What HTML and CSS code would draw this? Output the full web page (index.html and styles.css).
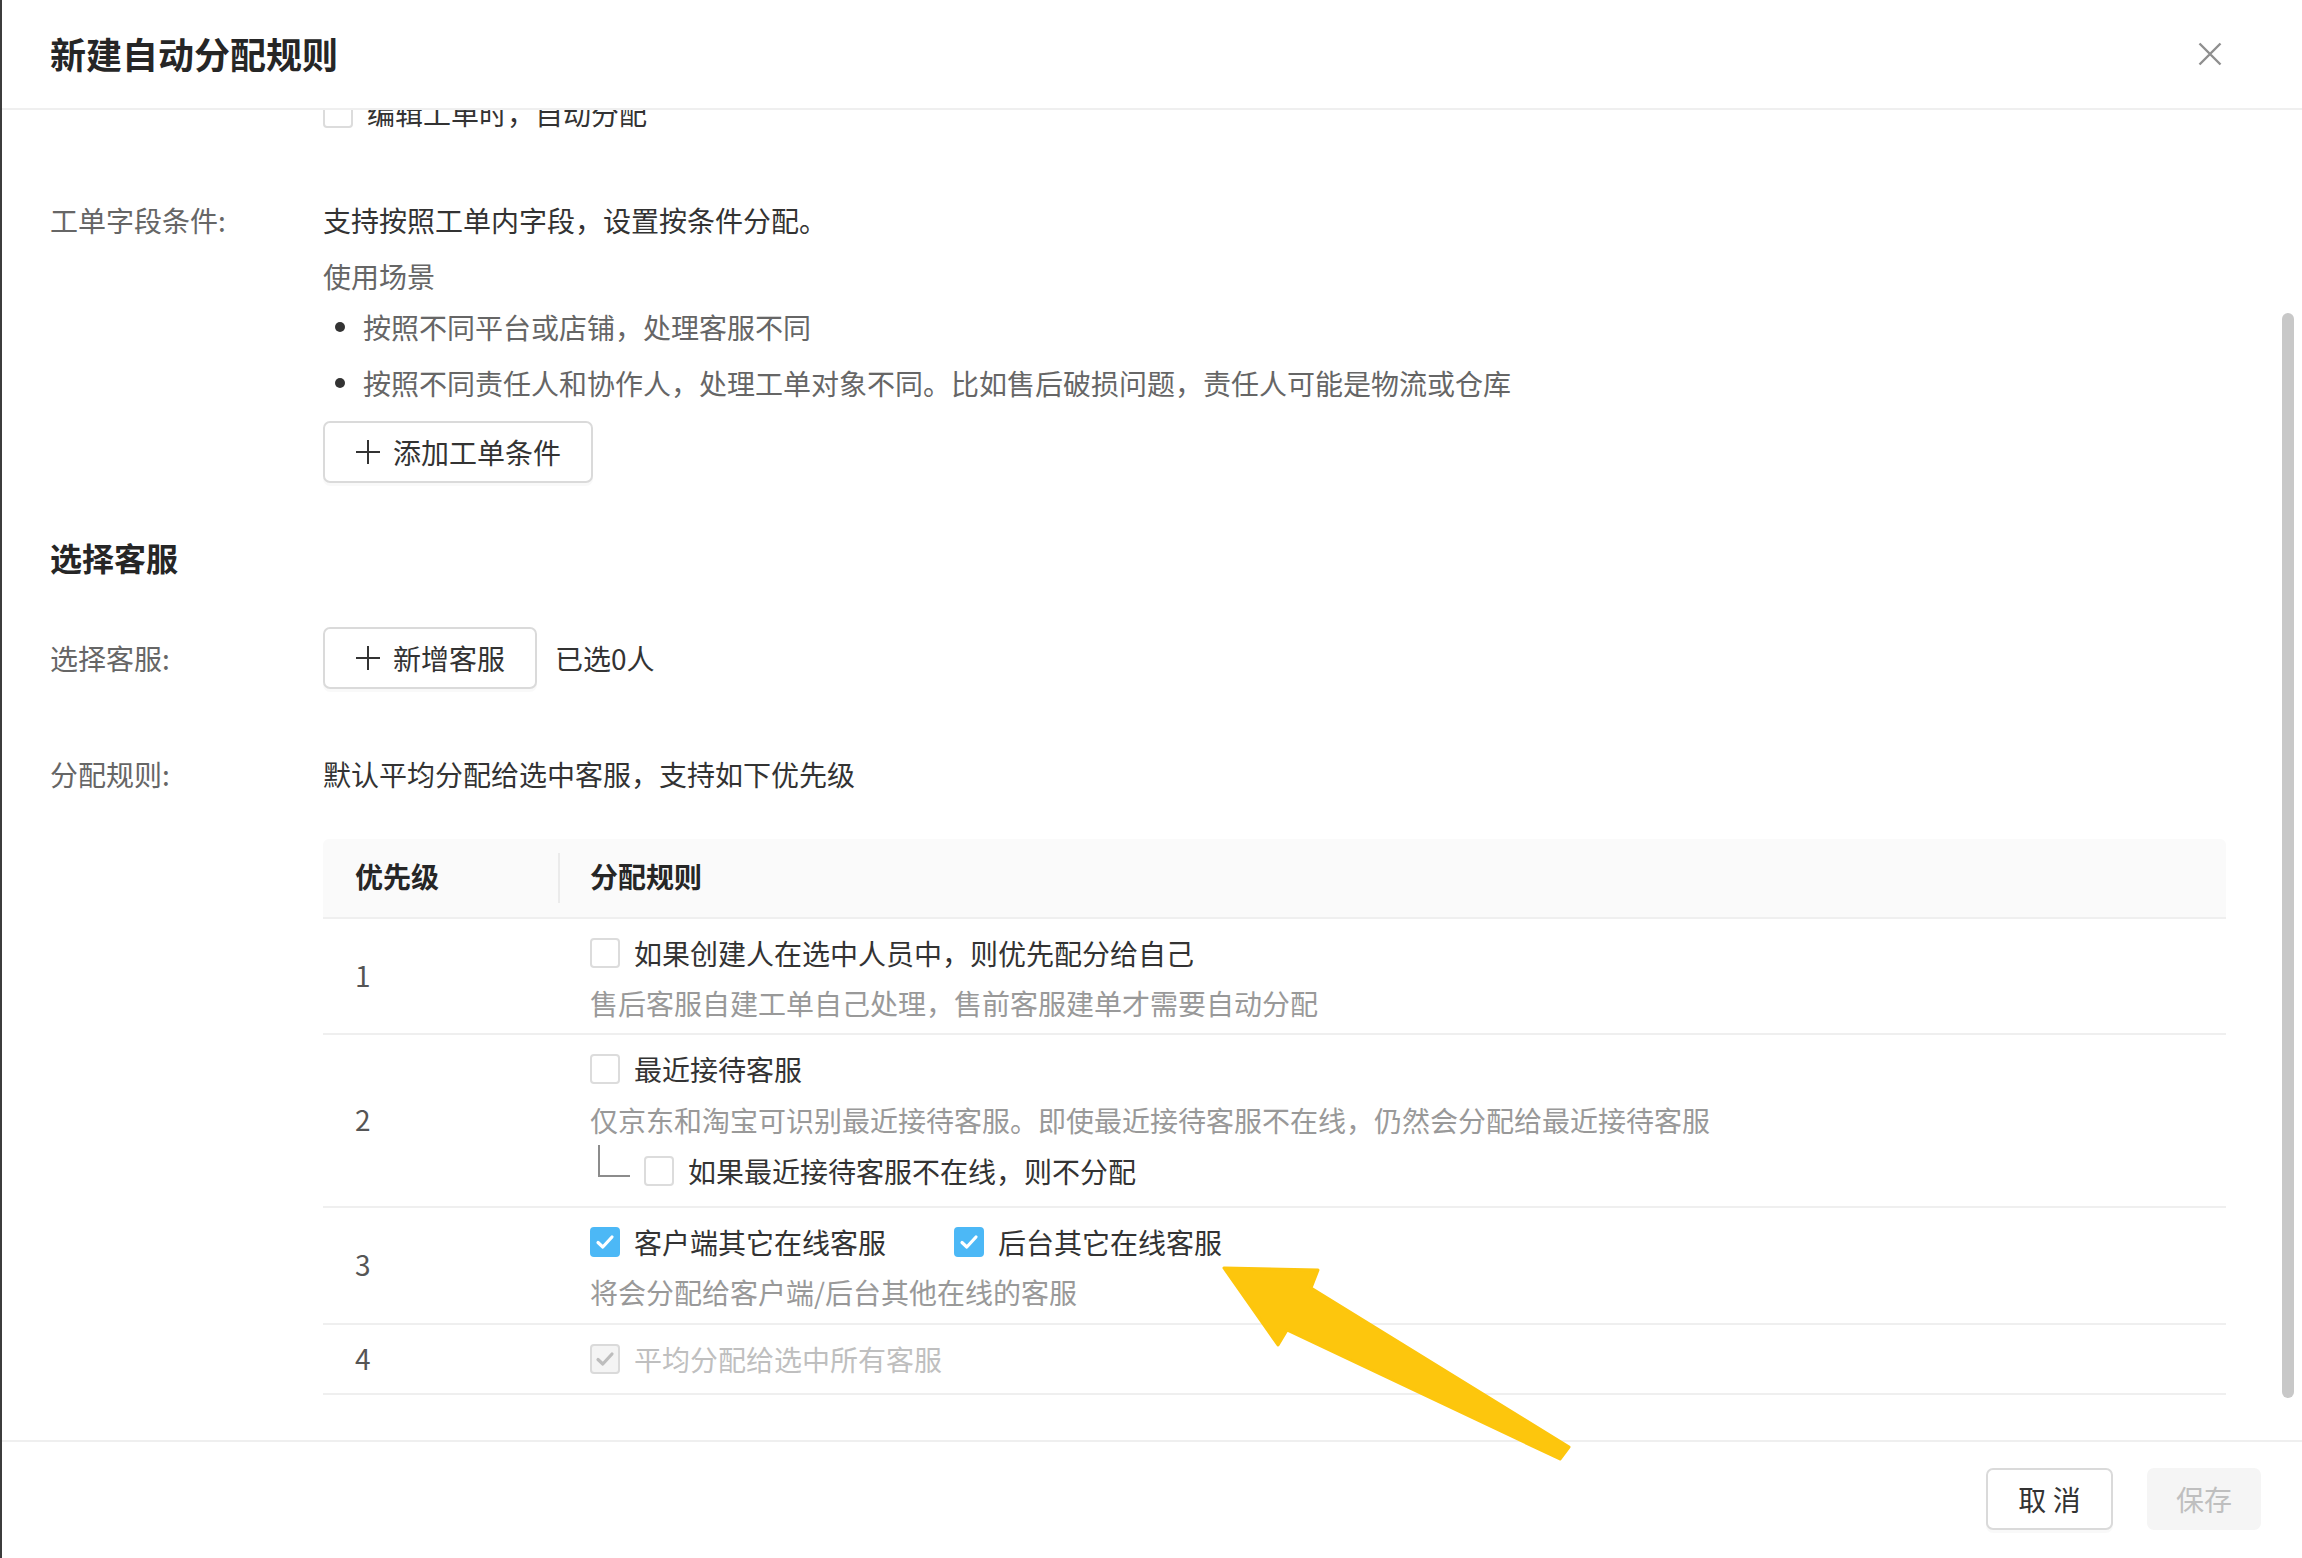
FILE: index.html
```html
<!DOCTYPE html>
<html lang="zh-CN">
<head>
<meta charset="utf-8">
<title>新建自动分配规则</title>
<link rel="stylesheet" href="styles.css">
</head>
<body>
<div class="drawer">
  <header class="drawer-header">
    <h1 class="drawer-title">新建自动分配规则</h1>
    <span class="close-btn">
      <svg width="24" height="24" viewBox="0 0 24 24"><path d="M1.5 1.5 L22.5 22.5 M22.5 1.5 L1.5 22.5" stroke="#8f8f8f" stroke-width="2.4" fill="none"/></svg>
    </span>
  </header>

  <div class="drawer-body">
    <div class="content">
      <div class="form-row first-row">
        <div class="label"></div>
        <div class="field">
          <label class="option"><span class="cb"></span><span class="line">编辑工单时，自动分配</span></label>
        </div>
      </div>

      <div class="form-row cond-row">
        <div class="label line">工单字段条件:</div>
        <div class="field">
          <p class="line">支持按照工单内字段，设置按条件分配。</p>
          <p class="line muted scene">使用场景</p>
          <ul class="bullets">
            <li class="line">按照不同平台或店铺，处理客服不同</li>
            <li class="line">按照不同责任人和协作人，处理工单对象不同。比如售后破损问题，责任人可能是物流或仓库</li>
          </ul>
          <button class="btn add-cond"><svg class="plus" width="26" height="26" viewBox="0 0 26 26"><path d="M13 1 V25 M1 13 H25" stroke="#333" stroke-width="2" fill="none"/></svg>添加工单条件</button>
        </div>
      </div>

      <h2 class="section-title">选择客服</h2>

      <div class="form-row agent-row">
        <div class="label">选择客服:</div>
        <div class="field inline">
          <button class="btn"><svg class="plus" width="26" height="26" viewBox="0 0 26 26"><path d="M13 1 V25 M1 13 H25" stroke="#333" stroke-width="2" fill="none"/></svg>新增客服</button>
          <span class="selected">已选0人</span>
        </div>
      </div>

      <div class="form-row rule-row">
        <div class="label line">分配规则:</div>
        <div class="field">
          <p class="line">默认平均分配给选中客服，支持如下优先级</p>
          <div class="table">
            <div class="thead">
              <div class="th th-num">优先级</div>
              <div class="th th-rule">分配规则</div>
            </div>
            <div class="tr r1">
              <div class="td-num">1</div>
              <div class="td-rule">
                <label class="option"><span class="cb"></span><span class="line">如果创建人在选中人员中，则优先配分给自己</span></label>
                <p class="line desc">售后客服自建工单自己处理，售前客服建单才需要自动分配</p>
              </div>
            </div>
            <div class="tr r2">
              <div class="td-num">2</div>
              <div class="td-rule">
                <label class="option"><span class="cb"></span><span class="line">最近接待客服</span></label>
                <p class="line desc">仅京东和淘宝可识别最近接待客服。即使最近接待客服不在线，仍然会分配给最近接待客服</p>
                <div class="sub">
                  <span class="elbow"></span>
                  <label class="option"><span class="cb"></span><span class="line">如果最近接待客服不在线，则不分配</span></label>
                </div>
              </div>
            </div>
            <div class="tr r3">
              <div class="td-num">3</div>
              <div class="td-rule">
                <div class="options">
                  <label class="option"><span class="cb checked"><svg width="30" height="30" viewBox="0 0 30 30"><path d="M8 15.5 L12.8 20 L22 10" stroke="#fff" stroke-width="3.2" fill="none" stroke-linecap="round" stroke-linejoin="round"/></svg></span><span class="line">客户端其它在线客服</span></label>
                  <label class="option"><span class="cb checked"><svg width="30" height="30" viewBox="0 0 30 30"><path d="M8 15.5 L12.8 20 L22 10" stroke="#fff" stroke-width="3.2" fill="none" stroke-linecap="round" stroke-linejoin="round"/></svg></span><span class="line">后台其它在线客服</span></label>
                </div>
                <p class="line desc">将会分配给客户端/后台其他在线的客服</p>
              </div>
            </div>
            <div class="tr r4">
              <div class="td-num">4</div>
              <div class="td-rule">
                <label class="option disabled"><span class="cb checked-disabled"><svg width="30" height="30" viewBox="0 0 30 30"><path d="M8 15.5 L12.8 20 L22 10" stroke="#bdbdbd" stroke-width="3.2" fill="none" stroke-linecap="round" stroke-linejoin="round"/></svg></span><span class="line">平均分配给选中所有客服</span></label>
              </div>
            </div>
          </div>
        </div>
      </div>
    </div>
    <div class="scrollbar"></div>
  </div>

  <footer class="drawer-footer">
    <button class="btn cancel">取 消</button>
    <button class="btn save">保存</button>
  </footer>
</div>

<svg class="arrow" width="2302" height="1558" viewBox="0 0 2302 1558">
  <polygon points="1224,1268 1318,1270 1311,1288 1569,1447 1560,1459 1287,1330 1278,1345" fill="#fdc60d" stroke="#fdc60d" stroke-width="3" stroke-linejoin="round"/>
</svg>
</body>
</html>
```

FILE: styles.css
```css
* {
  box-sizing: border-box;
  margin: 0;
  padding: 0;
}

html, body {
  width: 2302px;
  height: 1558px;
  overflow: hidden;
}

body {
  font-family: "Noto Sans CJK SC", "Noto Sans", sans-serif;
  font-size: 28px;
  color: #333;
  background: #fff;
}

.drawer {
  height: 1558px;
  display: flex;
  flex-direction: column;
  border-left: 2px solid #3c3c3c;
  background: #fff;
}

.drawer-header {
  height: 110px;
  flex: none;
  display: flex;
  align-items: center;
  justify-content: space-between;
  padding: 0 80px 0 48px;
  border-bottom: 2px solid #efefef;
  position: relative;
  z-index: 2;
  background: #fff;
}

.drawer-title {
  font-size: 36px;
  font-weight: 700;
  color: #262626;
  line-height: 48px;
  margin-bottom: 3px;
}

.close-btn {
  display: flex;
  width: 24px;
  height: 24px;
}

.drawer-body {
  flex: 1;
  position: relative;
  overflow: hidden;
}

.content {
  margin-top: -20px;
  padding: 0 76px 0 48px;
}

.line {
  line-height: 40px;
}

.form-row {
  display: flex;
}

.first-row {
  margin-top: 3px;
}

.label {
  width: 273px;
  flex: none;
  color: #666;
}

.field {
  flex: 1;
  min-width: 0;
}

.cond-row {
  margin-top: 64px;
}

.muted {
  color: #666;
}

.scene {
  margin-top: 16px;
}

.bullets {
  list-style: none;
  color: #666;
}

.bullets li {
  display: flex;
  align-items: center;
  margin-top: 11px;
}

.bullets li + li {
  margin-top: 16px;
}

.bullets li::before {
  content: "";
  width: 10px;
  height: 10px;
  border-radius: 50%;
  background: #333;
  margin: 0 18px 0 12px;
  flex: none;
}

.btn {
  height: 62px;
  border: 2px solid #dadada;
  border-radius: 7px;
  padding: 0 30px;
  display: inline-flex;
  align-items: center;
  gap: 12px;
  background: #fff;
  font-family: inherit;
  font-size: 28px;
  color: #333;
  box-shadow: 0 3px 0 rgba(0, 0, 0, 0.025);
}

.plus {
  flex: none;
}

.add-cond {
  margin-top: 18px;
}

.section-title {
  margin-top: 52px;
  font-size: 32px;
  font-weight: 700;
  line-height: 44px;
  color: #262626;
}

.agent-row {
  margin-top: 48px;
  align-items: center;
}

.field.inline {
  display: flex;
  align-items: center;
  gap: 18px;
}

.rule-row {
  margin-top: 65px;
}

/* checkbox */
.option {
  display: inline-flex;
  align-items: center;
  gap: 14px;
  color: #333;
}

.cb {
  width: 30px;
  height: 30px;
  flex: none;
  border: 2px solid #dcdcdc;
  border-radius: 4px;
  background: #fff;
  display: flex;
  align-items: center;
  justify-content: center;
}

.cb svg {
  flex: none;
}

.cb.checked {
  background: #4cb8f6;
  border-color: #4cb8f6;
}

.cb.checked-disabled {
  background: #f4f4f4;
  border-color: #dadada;
}

.option.disabled {
  color: #bfbfbf;
}

/* table */
.table {
  margin-top: 45px;
}

.thead {
  height: 80px;
  display: flex;
  align-items: center;
  background: #fafafa;
  border-bottom: 2px solid #efefef;
  border-radius: 6px 6px 0 0;
  font-weight: 700;
  color: #262626;
}

.th {
  line-height: 46px;
}

.th-num {
  width: 235px;
  padding-left: 32px;
  padding-bottom: 4px;
}

.th-rule {
  border-left: 2px solid #ebebeb;
  padding-left: 30px;
  padding-bottom: 4px;
}

.tr {
  display: flex;
  border-bottom: 2px solid #efefef;
}

.td-num {
  width: 235px;
  flex: none;
  padding-left: 32px;
  padding-bottom: 3px;
  display: flex;
  align-items: center;
  color: #555;
}

.td-rule {
  flex: 1;
  padding-left: 32px;
  display: flex;
  flex-direction: column;
  align-items: flex-start;
}

.desc {
  color: #999;
}

.r1 .td-rule {
  padding-top: 14px;
  padding-bottom: 10px;
  gap: 10px;
}

.r2 .td-rule {
  padding-top: 14px;
  padding-bottom: 15px;
  gap: 11px;
}

.r3 .td-rule {
  padding-top: 14px;
  padding-bottom: 11px;
  gap: 10px;
}

.r4 .td-rule {
  padding-top: 14px;
  padding-bottom: 14px;
}

.options {
  display: flex;
  gap: 68px;
}

.sub {
  display: flex;
  align-items: center;
}

.elbow {
  width: 32px;
  height: 32px;
  flex: none;
  align-self: flex-start;
  margin: -6px 14px 0 8px;
  border-left: 2px solid #8c8c8c;
  border-bottom: 2px solid #8c8c8c;
}

.scrollbar {
  position: absolute;
  right: 8px;
  top: 203px;
  width: 12px;
  height: 1085px;
  border-radius: 6px;
  background: #c8c8c8;
}

/* footer */
.drawer-footer {
  height: 118px;
  flex: none;
  border-top: 2px solid #efefef;
  display: flex;
  justify-content: flex-end;
  align-items: flex-start;
  gap: 34px;
  padding: 26px 41px 0 0;
}

.cancel {
  width: 127px;
  justify-content: center;
  padding: 0;
}

.save {
  width: 114px;
  justify-content: center;
  padding: 0;
  border-color: #f5f5f5;
  background: #f5f5f5;
  color: #bfbfbf;
  box-shadow: none;
}

.arrow {
  position: absolute;
  left: 0;
  top: 0;
  pointer-events: none;
}
```
